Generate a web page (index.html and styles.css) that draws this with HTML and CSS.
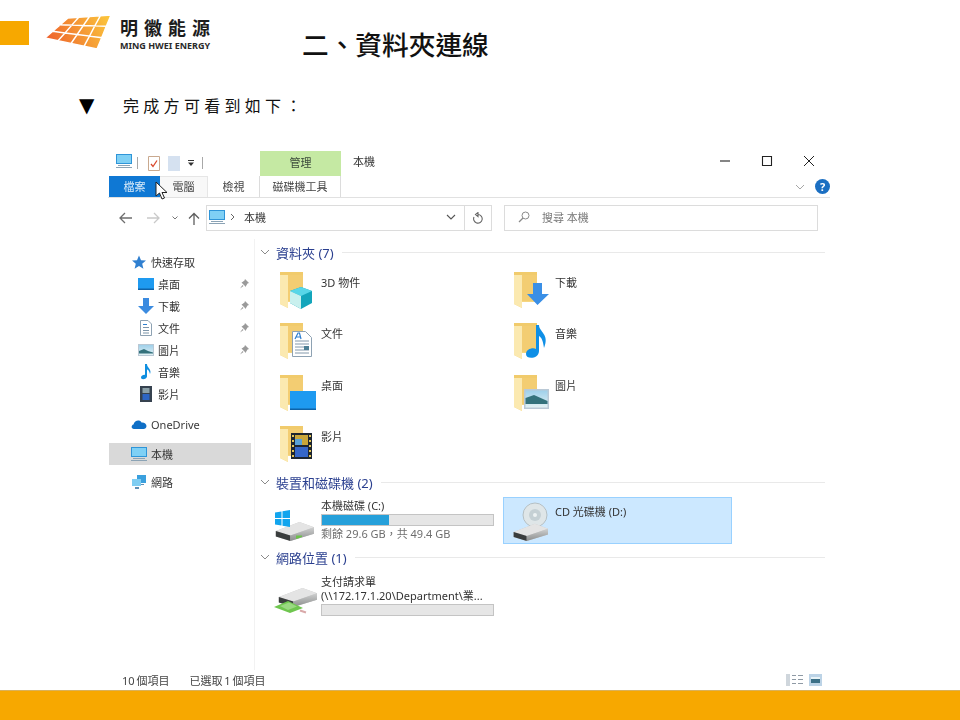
FILE: index.html
```html
<!DOCTYPE html>
<html lang="zh-Hant">
<head>
<meta charset="utf-8">
<title>二、資料夾連線</title>
<link rel="stylesheet" href="styles.css">
</head>
<body>
<svg class="defs" aria-hidden="true">
  <defs>
    <linearGradient id="logoGrad" gradientUnits="userSpaceOnUse" x1="48" y1="44" x2="110" y2="14">
      <stop offset="0" stop-color="#ee5f2b"/><stop offset=".55" stop-color="#f59b35"/><stop offset="1" stop-color="#fcc93c"/>
    </linearGradient>
    <linearGradient id="skyGrad" x1="0" y1="0" x2="0" y2="1">
      <stop offset="0" stop-color="#9fd0ea"/><stop offset="1" stop-color="#e3f2f4"/>
    </linearGradient>
    <linearGradient id="barGrad" x1="0" y1="0" x2="0" y2="1">
      <stop offset="0" stop-color="#cfd0d0"/><stop offset="1" stop-color="#8b8d8d"/>
    </linearGradient>
    <symbol id="folder" viewBox="0 0 36 40">
      <path d="M0 1H23V31H8V37L0 33Z" fill="#f5d682"/>
      <path d="M8 4H23V30H8Z" fill="#f3cd72"/>
      <path d="M0 1L8 1V37L0 33Z" fill="#fbe9b0"/>
      <path d="M0 1H23V4H0Z" fill="#f1cb6c"/>
    </symbol>
    <symbol id="pc" viewBox="0 0 16 16">
      <path d="M0 1H16V11H0Z" fill="#2f95d8"/>
      <path d="M1 2H15V10H1Z" fill="#7fd0f5"/>
      <path d="M2 12H14V13H2ZM0 14H16V15H0Z" fill="#8ba3b5"/>
    </symbol>
    <symbol id="desk" viewBox="0 0 16 16">
      <path d="M0 2H16V14H0Z" fill="#1e9af0"/>
      <path d="M0 12.500H16V14H0Z" fill="#0f62a8"/>
    </symbol>
    <symbol id="down" viewBox="0 0 16 16">
      <path d="M5 0H11V8H16L8 16 0 8H5Z" fill="#3b8be0"/>
    </symbol>
    <symbol id="doc" viewBox="0 0 16 16">
      <path d="M2.500 .5H10L13.500 4V15.500H2.500Z" fill="#fff" stroke="#8ea2b3"/>
      <path d="M5 4H9V5H5Z" fill="#2d7fd0"/>
      <path d="M5 7H11V8H5ZM5 10H11V11H5ZM5 12.500H11V13.500H5Z" fill="#7d95aa"/>
    </symbol>
    <symbol id="pic" viewBox="0 0 16 16">
      <path d="M0 2H16V14H0Z" fill="#b9c8d4"/>
      <path d="M1 3H15V13H1Z" fill="url(#skyGrad)"/>
      <path d="M1 9L6 7 10 9 15 10.500V11.500H1Z" fill="#34727c"/>
    </symbol>
    <symbol id="note" viewBox="0 0 16 16">
      <path d="M7 0H9C9 4 14 5 12 10 11 6 10 6 9 5.500V12.500C9 15 3 16.500 3 13.500 3 11.500 6 10.500 7 11Z" fill="#0f8fe0"/>
    </symbol>
    <symbol id="film" viewBox="0 0 16 16">
      <path d="M2 0H14V16H2Z" fill="#36424f"/>
      <path d="M4.500 2H11.500V7H4.500Z" fill="#8aa0a8"/>
      <path d="M4.500 8H11.500V14H4.500Z" fill="#2d66c4"/>
    </symbol>
    <symbol id="cloud" viewBox="0 0 16 16">
      <path d="M3 13C0 13 0 9 2.500 8.500 3.500 4 9 3.500 10.500 6.500 13 6 15.500 8 15.500 10 15.500 12 14 13 12.500 13Z" fill="#0f6fc6"/>
    </symbol>
    <symbol id="net" viewBox="0 0 16 16">
      <path d="M6 1H15V9H6Z" fill="#3aa0de"/>
      <path d="M1 5H10V12H1Z" fill="#7fcdf2"/>
      <path d="M4 13H8V15H4ZM10 10H13V11H10Z" fill="#5f8fb5"/>
    </symbol>
    <symbol id="pin" viewBox="0 0 10 10">
      <path d="M6 0L10 4 8.500 4.500 7 7 7 8 2.500 3.500 3.500 3 5.500 1.500ZM3.500 6L1 9.500 4.500 7Z" fill="#9a9a9a"/>
    </symbol>
    <symbol id="drive" viewBox="0 0 44 22">
      <path d="M2 11L28 1 44 7V14L18 22 2 17Z" fill="#c9c9c9"/>
      <path d="M2 11L18 16 44 7 28 1Z" fill="#e4e4e4"/>
      <path d="M2 11L18 16V22L2 17Z" fill="#3a3d3d"/>
      <path d="M18 16L44 7V14L18 22Z" fill="url(#barGrad)"/>
    </symbol>
  </defs>
</svg>

<div class="slide">
  <header class="head">
    <div class="accent"></div>
    <svg class="logo" width="68" height="40" viewBox="44 13 68 40" aria-hidden="true">
      <path fill="url(#logoGrad)" stroke="#fff" stroke-width="1.400" d="M68 18L78.800 17.300 71.800 25.100 60.300 24.700ZM78.800 17.300L89.500 16.500 83.300 25.500 71.800 25.100ZM89.500 16.500L100.300 15.800 94.800 25.900 83.300 25.500ZM100.300 15.800L111 15 106.300 26.300 94.800 25.900ZM60.300 24.700L71.800 25.100 65 33 52.700 31.300ZM71.800 25.100L83.300 25.500 77.200 34.500 65 33ZM83.300 25.500L94.800 25.900 89.500 36.100 77.200 34.500ZM94.800 25.900L106.300 26.300 101.700 37.700 89.500 36.100ZM52.700 31.300L65 33 58 40.800 45 38ZM65 33L77.200 34.500 71 43.500 58 40.800ZM77.200 34.500L89.500 36.100 84 46.300 71 43.500ZM89.500 36.100L101.700 37.700 97 49 84 46.300Z"/>
    </svg>
    <div class="brand">
      <div class="brand-zh">明徽能源</div>
      <div class="brand-en">MING HWEI ENERGY</div>
    </div>
    <h1 class="title">二、資料夾連線</h1>
  </header>

  <div class="lead">
    <span class="lead-mark">▼</span>
    <span class="lead-text">完成方可看到如下：</span>
  </div>

  <section class="win">
    <div class="titlebar">
      <svg class="ic qat-pc"><use href="#pc"/></svg>
      <span class="qat-sep"></span>
      <svg class="qat-doc" width="12" height="15" viewBox="0 0 12 15"><path d="M.5 .5H11.500V14.500H.5Z" fill="#fff" stroke="#c9a98f"/><path d="M3 8L5 10.500 9 4.500" fill="none" stroke="#d9472b" stroke-width="1.300"/></svg>
      <svg class="qat-page" width="12" height="15" viewBox="0 0 12 15"><path d="M0 0H12V15H0Z" fill="#d5e1f0"/></svg>
      <svg class="qat-more" width="6" height="6" viewBox="0 0 6 6"><path d="M0 0H6V1H0ZM0 2.500H6L3 6Z" fill="#333"/></svg>
      <span class="qat-sep qat-sep-end"></span>
      <div class="ctx-tab">管理</div>
      <div class="win-name">本機</div>
      <div class="controls">
        <span class="ctl"><svg width="12" height="12" viewBox="0 0 12 12"><path d="M1 6H11" stroke="#222" stroke-width="1.100"/></svg></span>
        <span class="ctl"><svg width="12" height="12" viewBox="0 0 12 12"><path d="M1.500 1.500H10.500V10.500H1.500Z" fill="none" stroke="#222" stroke-width="1.100"/></svg></span>
        <span class="ctl"><svg width="12" height="12" viewBox="0 0 12 12"><path d="M1 1L11 11M11 1L1 11" stroke="#222" stroke-width="1"/></svg></span>
      </div>
    </div>

    <nav class="tabs">
      <div class="tab tab-file">檔案</div>
      <div class="tab tab-pc">電腦</div>
      <div class="tab tab-view">檢視</div>
      <div class="tab tab-tool">磁碟機工具</div>
      <svg class="tabs-chev" width="10" height="6" viewBox="0 0 10 6"><path d="M1 1L5 5 9 1" fill="none" stroke="#a6a6a6"/></svg>
      <div class="help">?</div>
    </nav>

    <div class="addr">
      <svg class="nav nav-back" width="14" height="12" viewBox="0 0 14 12"><path d="M6 1L1 6 6 11M1 6H13" fill="none" stroke="#6e6e6e" stroke-width="1.300"/></svg>
      <svg class="nav nav-fwd" width="14" height="12" viewBox="0 0 14 12"><path d="M8 1L13 6 8 11M13 6H1" fill="none" stroke="#c9c9c9" stroke-width="1.300"/></svg>
      <svg class="nav nav-drop" width="6" height="4" viewBox="0 0 6 4"><path d="M.5 .5L3 3 5.500 .5" fill="none" stroke="#777"/></svg>
      <svg class="nav nav-up" width="14" height="13" viewBox="0 0 14 13"><path d="M2 6.500L7 1.500 12 6.500M7 1.500V13" fill="none" stroke="#5e5e5e" stroke-width="1.300"/></svg>
      <div class="addr-box">
        <svg class="ic"><use href="#pc"/></svg>
        <svg class="addr-sep" width="5" height="8" viewBox="0 0 5 8"><path d="M1 1L4 4 1 7" fill="none" stroke="#666"/></svg>
        <span class="addr-text">本機</span>
        <svg class="addr-chev" width="10" height="6" viewBox="0 0 10 6"><path d="M1 1L5 5 9 1" fill="none" stroke="#555" stroke-width="1.100"/></svg>
      </div>
      <div class="refresh">
        <svg width="12" height="13" viewBox="0 0 12 13"><path d="M6 2.500A4.300 4.300 0 1 1 2 5M6 .5V4.500L3.500 2.500Z" fill="none" stroke="#666" stroke-width="1.100"/></svg>
      </div>
      <div class="search">
        <svg width="12" height="12" viewBox="0 0 12 12"><circle cx="7.500" cy="4.500" r="3.500" fill="none" stroke="#8a8a8a"/><path d="M5 7L1 11" stroke="#8a8a8a" stroke-width="1.200"/></svg>
        <span>搜尋 本機</span>
      </div>
    </div>

    <div class="main">
      <aside class="side">
        <div class="row"><svg class="ic" viewBox="0 0 16 16"><path d="M8 1.500L10 6.200 15 6.600 11.200 9.800 12.400 14.700 8 12 3.600 14.700 4.800 9.800 1 6.600 6 6.200Z" fill="#2f7fd0"/></svg><span>快速存取</span></div>
        <div class="row row-sub"><svg class="ic"><use href="#desk"/></svg><span>桌面</span><svg class="pin"><use href="#pin"/></svg></div>
        <div class="row row-sub"><svg class="ic"><use href="#down"/></svg><span>下載</span><svg class="pin"><use href="#pin"/></svg></div>
        <div class="row row-sub"><svg class="ic"><use href="#doc"/></svg><span>文件</span><svg class="pin"><use href="#pin"/></svg></div>
        <div class="row row-sub"><svg class="ic"><use href="#pic"/></svg><span>圖片</span><svg class="pin"><use href="#pin"/></svg></div>
        <div class="row row-sub"><svg class="ic"><use href="#note"/></svg><span>音樂</span></div>
        <div class="row row-sub"><svg class="ic"><use href="#film"/></svg><span>影片</span></div>
        <div class="row row-gap"><svg class="ic"><use href="#cloud"/></svg><span class="tight">OneDrive</span></div>
        <div class="row row-gap row-on"><svg class="ic"><use href="#pc"/></svg><span>本機</span></div>
        <div class="row row-last"><svg class="ic"><use href="#net"/></svg><span>網路</span></div>
      </aside>

      <div class="content">
        <div class="group"><svg class="chev" width="10" height="6" viewBox="0 0 10 6"><path d="M1 1L5 5 9 1" fill="none" stroke="#8a8a8a"/></svg><span>資料夾 (7)</span><i></i></div>
        <div class="folders">
          <div class="folder"><svg class="ficon" viewBox="0 0 36 40"><use href="#folder" width="36" height="40"/><path d="M21 16L32 20V32L21 38 10 32V20Z" fill="#13a5bb"/><path d="M10 20L21 16 32 20 21 25Z" fill="#58d6e8"/><path d="M10 20L21 25V38L10 32Z" fill="#c9f0ee"/></svg><span>3D 物件</span></div>
          <div class="folder"><svg class="ficon" viewBox="0 0 36 40"><use href="#folder" width="36" height="40"/><path d="M19 12H28V23H35L23.500 34 13 23H19Z" fill="#3a8fe6"/></svg><span>下載</span></div>
          <div class="folder"><svg class="ficon" viewBox="0 0 36 40"><use href="#folder" width="36" height="40"/><path d="M12.500 9.500H25.500L31.500 15.500V34.500H12.500Z" fill="#fff" stroke="#8ea2b3"/><path d="M15 17L18 11H19.500L21 17M16 15H20" fill="none" stroke="#2f7fd0" stroke-width="1.200"/><path d="M15 19H29M15 22H29M15 25H24M15 28H29M15 31H29" stroke="#8298ab"/><path d="M24 24H29V28H24Z" fill="#4e7f94"/></svg><span>文件</span></div>
          <div class="folder"><svg class="ficon" viewBox="0 0 36 40"><use href="#folder" width="36" height="40"/><path d="M22 3H25C25 10 36 12 30 26 29 19 28 16 25 14V29C25 37 12 38 12 32 12 27 19 25 22 27Z" fill="#0f8fe6"/></svg><span>音樂</span></div>
          <div class="folder"><svg class="ficon" viewBox="0 0 36 40"><use href="#folder" width="36" height="40"/><path d="M10 17H36V36H10Z" fill="#1e9af0"/><path d="M10 34.500H36V36H10Z" fill="#0e63a8"/></svg><span>桌面</span></div>
          <div class="folder"><svg class="ficon" viewBox="0 0 36 40"><use href="#folder" width="36" height="40"/><path d="M10 15H35V35H10Z" fill="#bac9d6"/><path d="M11.500 16.500H33.500V33.500H11.500Z" fill="url(#skyGrad)"/><path d="M11.500 24L20 21 33.500 27V30H11.500Z" fill="#34727c"/></svg><span>圖片</span></div>
          <div class="folder"><svg class="ficon" viewBox="0 0 36 40"><use href="#folder" width="36" height="40"/><path d="M11 8H32V34H11Z" fill="#1d2530"/><path d="M15 10H28V20H15Z" fill="#c9a63a"/><path d="M15 14H22V20H15Z" fill="#5aa2d8"/><path d="M15 22H28V32H15Z" fill="#3566c9"/><path d="M12 10H14V12H12ZM12 15H14V17H12ZM12 20H14V22H12ZM12 25H14V27H12ZM12 30H14V32H12ZM29 10H31V12H29ZM29 15H31V17H29ZM29 20H31V22H29ZM29 25H31V27H29ZM29 30H31V32H29Z" fill="#e3c65a"/></svg><span>影片</span></div>
        </div>

        <div class="group"><svg class="chev" width="10" height="6" viewBox="0 0 10 6"><path d="M1 1L5 5 9 1" fill="none" stroke="#8a8a8a"/></svg><span>裝置和磁碟機 (2)</span><i></i></div>
        <div class="drives">
          <div class="drive">
            <svg class="dicon" viewBox="0 0 44 48">
              <use href="#drive" x="1" y="24" width="42" height="20"/>
              <path d="M3 15.500L9.500 14.500V21H3ZM10.500 14.300L18 13V21H10.500ZM3 22H9.500V28.500L3 27.500ZM10.500 22H18V30L10.500 28.700Z" fill="#12a5ee"/>
              <path d="M24 38.500H30V40L24 42Z" fill="#6cc24a"/>
            </svg>
            <div class="dinfo">
              <div class="dname">本機磁碟 (C:)</div>
              <div class="meter"><div class="fill" style="width:39%"></div></div>
              <div class="dfree">剩餘 29.6 GB，共 49.4 GB</div>
            </div>
          </div>
          <div class="drive drive-sel">
            <svg class="dicon" viewBox="0 0 44 48">
              <circle cx="27" cy="18" r="12" fill="#dfe6e8" stroke="#b5c0c4"/>
              <circle cx="27" cy="18" r="6" fill="#c5d0d4"/>
              <circle cx="27" cy="18" r="2" fill="#eef2f3"/>
              <use href="#drive" x="2" y="26" width="40" height="18"/>
            </svg>
            <div class="dname dname-sel">CD 光碟機 (D:)</div>
          </div>
        </div>

        <div class="group"><svg class="chev" width="10" height="6" viewBox="0 0 10 6"><path d="M1 1L5 5 9 1" fill="none" stroke="#8a8a8a"/></svg><span>網路位置 (1)</span><i></i></div>
        <div class="netloc">
          <svg class="dicon net-icon" viewBox="0 0 44 48">
            <use href="#drive" x="3" y="16" width="40" height="20"/>
            <path d="M0 36L14 30 29 37 16 42Z" fill="#6fc64f"/>
            <path d="M6 35L15 31.500 23 35.500 14 39Z" fill="#9ad982"/>
            <path d="M26 39.500L32 41.500" stroke="#d9a9a9" stroke-width="2"/>
          </svg>
          <div class="dinfo">
            <div class="dname">支付請求單</div>
            <div class="dname">(\\172.17.1.20\Department\業...</div>
            <div class="meter"></div>
          </div>
        </div>
      </div>
    </div>

    <footer class="status">
      <span>10 個項目</span>
      <span class="status-sel">已選取 1 個項目</span>
      <svg class="view-a" width="17" height="12" viewBox="0 0 17 12"><path d="M0 0H4V12H0Z" fill="#cfd6dc"/><path d="M6 1H10V2H6ZM12 1H17V2H12ZM6 5H10V6H6ZM12 5H17V6H12ZM6 9H10V10H6ZM12 9H17V10H12Z" fill="#8f9aa5"/></svg>
      <svg class="view-b" width="13" height="12" viewBox="0 0 13 12"><path d="M0 0H13V12H0Z" fill="#bcd3e6"/><path d="M2 3H11V9H2Z" fill="#3b7087"/><path d="M2 3H11V5H2Z" fill="#e8f3f7"/></svg>
    </footer>

    <svg class="cursor" width="13" height="19" viewBox="0 0 13 19"><path d="M1 1V15L4.500 12 7 18 9.500 17 7 11.500H12Z" fill="#fff" stroke="#222" stroke-width="1"/></svg>
  </section>

  <div class="band"></div>
</div>
</body>
</html>
```

FILE: styles.css
```css
* { box-sizing: border-box; }
html, body { margin: 0; padding: 0; background: #fff; }
body { font-family: "Noto Sans", "Noto Sans CJK TC", sans-serif; color: #222; }
.defs { display: block; width: 0; height: 0; overflow: hidden; }

.slide { width: 960px; height: 720px; display: flex; flex-direction: column; overflow: hidden; background: #fff; }

.head { height: 62px; flex: none; display: flex; align-items: flex-start; }
.accent { width: 29px; height: 24px; margin-top: 21px; background: #f7a800; }
.logo { margin: 13px 0 0 15px; flex: none; }
.brand { margin: 16px 0 0 8px; width: 96px; }
.brand-zh { font: 700 18px/22px "Noto Sans CJK TC", sans-serif; letter-spacing: 6px; color: #1c1c1c; white-space: nowrap; }
.brand-en { font: 700 9px/12px "Noto Sans", sans-serif; color: #2a2a2a; white-space: nowrap; margin-top: 2px; }
.title { margin: 24px 0 0 86px; font: 500 26.700px/40px "Noto Sans CJK TC", sans-serif; color: #111; white-space: nowrap; }

.lead { height: 88px; flex: none; padding: 31px 0 0 79px; display: flex; align-items: flex-start; align-self: flex-start; }
.lead-mark { width: 44px; font: 20px/24px "DejaVu Sans", sans-serif; color: #000; }
.lead-text { font: 400 16px/24px "Noto Sans CJK TC", sans-serif; letter-spacing: 4.300px; color: #111; white-space: nowrap; }

.win { position: relative; margin-left: 108px; width: 722px; flex: 1; min-height: 0; display: flex; flex-direction: column; font-size: 11px; filter: blur(.3px); }
.ic { width: 16px; height: 16px; flex: none; }

.titlebar { height: 26px; flex: none; display: flex; align-items: center; padding-left: 8px; }
.qat-pc { margin-top: -4px; }
.qat-sep { width: 1px; height: 12px; margin-left: 5px; background: #a8a8a8; }
.qat-doc { margin-left: 10px; }
.qat-page { margin-left: 8px; }
.qat-more { margin-left: 8px; }
.qat-sep-end { margin-left: 8px; }
.ctx-tab { width: 81px; height: 25px; margin: 1px 0 0 57px; background: #c5e9a3; color: #3c4a3c; text-align: center; line-height: 24px; }
.win-name { margin-left: 12px; margin-top: -4px; color: #333; }
.controls { margin-left: auto; display: flex; margin-top: -4px; }
.ctl { width: 42px; display: flex; justify-content: center; }

.tabs { height: 22px; flex: none; display: flex; align-items: stretch; border-bottom: 1px solid #e1e1e1; padding-left: 1px; }
.tab { text-align: center; line-height: 21px; color: #444; }
.tab-file { width: 51px; background: #0f78d4; color: #dcecf9; }
.tab-pc { width: 48px; background: #f8f8f8; border-right: 1px solid #e6e6e6; border-top: 1px solid #e6e6e6; line-height: 19px; }
.tab-view { width: 51px; }
.tab-tool { width: 82px; border-left: 1px solid #dcdcdc; border-right: 1px solid #dcdcdc; }
.tabs-chev { margin: 8px 0 0 454px; }
.help { width: 15px; height: 15px; margin: 3px 0 0 10px; border-radius: 50%; background: #1b6fc2; color: #fff; font: 700 11px/15px "Noto Sans", sans-serif; text-align: center; }

.addr { height: 26px; margin-top: 7px; flex: none; display: flex; align-items: center; }
.nav { flex: none; }
.nav-back { margin-left: 11px; }
.nav-fwd { margin-left: 13px; }
.nav-drop { margin-left: 12px; }
.nav-up { margin-left: 9px; }
.addr-box { width: 259px; height: 26px; margin-left: 5px; border: 1px solid #dcdcdc; display: flex; align-items: center; padding: 0 0 2px 2px; color: #333; }
.addr-sep { margin-left: 5px; }
.addr-text { margin-left: 9px; }
.addr-chev { margin-left: auto; margin-right: 8px; }
.refresh { width: 27px; height: 26px; border: 1px solid #dcdcdc; border-left: 0; display: flex; align-items: center; justify-content: center; }
.search { width: 314px; height: 26px; margin-left: 12px; border: 1px solid #dcdcdc; display: flex; align-items: center; padding: 0 0 2px 13px; gap: 12px; color: #777; }

.main { flex: 1; min-height: 0; margin-top: 8px; display: flex; }
.side { width: 147px; flex: none; padding-top: 12px; border-right: 1px solid #f2f2f2; }
.row { height: 22px; margin: 0 3px 0 1px; padding: 0 2px 0 22px; display: flex; align-items: center; gap: 4px; color: #333; }
.row-sub { padding-left: 29px; }
.row-gap { margin-top: 8px; }
.row-last { margin-top: 6px; }
.row-on { background: #d9d9d9; }
.pin { width: 10px; height: 10px; margin-left: auto; }
.tight { color: #3a3a3a; }

.content { flex: 1; min-width: 0; padding: 0 5px 0 6px; }
.group { height: 26px; display: flex; align-items: center; font-size: 13px; color: #2a3f8f; }
.chev { flex: none; margin: 0 6px 0 -1px; }
.group i { flex: 1; height: 1px; margin-left: 8px; background: #e9e9e9; }

.folders { display: grid; grid-template-columns: 234px 234px; grid-auto-rows: 51.300px; padding-left: 19px; height: 204px; }
.folder { display: flex; align-items: flex-start; padding-top: 6px; }
.ficon { width: 36px; height: 40px; flex: none; }
.folder span { margin: 4px 0 0 5px; line-height: 16px; color: #333; }

.drives { height: 49px; padding: 2px 0 0 11px; display: grid; grid-template-columns: 231px 229px; }
.drive { display: flex; height: 47px; }
.dicon { width: 44px; height: 48px; flex: none; }
.dinfo { margin: 1px 0 0 5px; width: 173px; }
.dname { line-height: 16px; color: #333; white-space: nowrap; }
.meter { height: 12px; background: #e6e6e6; border: 1px solid #c4c4c4; }
.fill { height: 100%; background: #26a0da; }
.dfree { line-height: 16px; color: #6e6e6e; }
.drive-sel { background: #cce8ff; border: 1px solid #99d1ff; }
.drive-sel .dicon { margin-left: 4px; margin-top: -1px; }
.dname-sel { margin: 6px 0 0 3px; }

.netloc { display: flex; padding: 4px 0 0 13px; }
.net-icon { margin-top: -3px; }
.netloc .dinfo { margin-left: 3px; }
.netloc .dname { line-height: 14px; }
.netloc .meter { margin-top: 1px; }

.status { height: 20px; flex: none; display: flex; align-items: center; padding-left: 14px; color: #444; font-size: 11px; word-spacing: -1px; }
.status-sel { margin-left: 20px; }
.view-a { margin-left: auto; }
.view-b { margin: 0 8px 0 6px; }

.cursor { position: absolute; left: 47px; top: 31px; }

.band { height: 30px; flex: none; background: #f7a800; border-top: 1px solid #d9b15a; }
```
